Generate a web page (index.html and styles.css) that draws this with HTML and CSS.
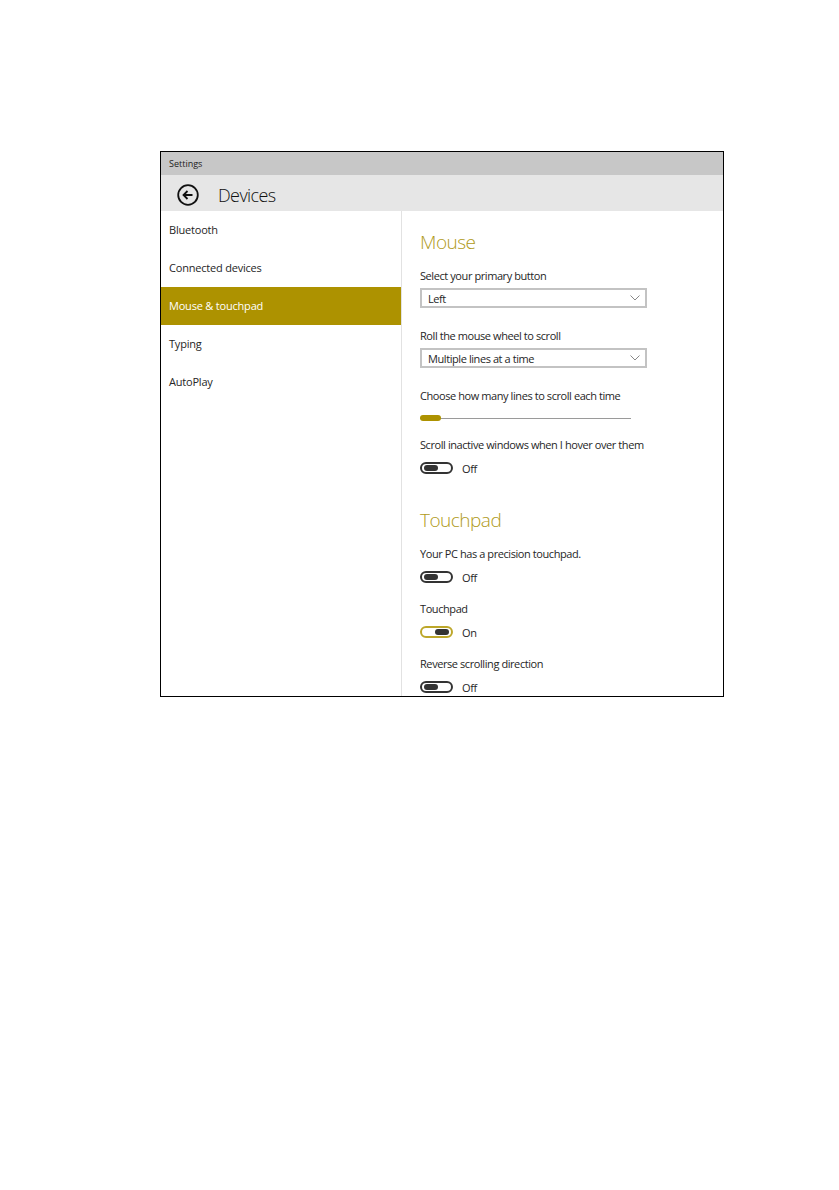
FILE: index.html
```html
<!DOCTYPE html>
<html lang="en">
<head>
  <meta charset="UTF-8" />
  <title>Settings - Devices</title>
  <link rel="stylesheet" href="styles.css">
</head>
<body>
  <div class="page">
    <div class="window">
      <div class="titlebar">Settings</div>

      <div class="header">
        <svg class="back" width="22" height="22" viewBox="0 0 22 22">
          <circle cx="11" cy="11" r="9.8" fill="none" stroke="#111" stroke-width="1.8"/>
          <path d="M15.5 11H6.5M10.5 7L6.5 11L10.5 15" fill="none" stroke="#111" stroke-width="1.8"/>
        </svg>
        <span class="header-title">Devices</span>
      </div>

      <div class="content">
        <ul class="nav">
          <li>Bluetooth</li>
          <li>Connected devices</li>
          <li class="active">Mouse &amp; touchpad</li>
          <li>Typing</li>
          <li>AutoPlay</li>
        </ul>

        <div class="panel">
          <h2 class="section-title">Mouse</h2>

          <div class="field first">
            <div class="label">Select your primary button</div>
            <div class="select">
              <span>Left</span>
              <svg width="10" height="6" viewBox="0 0 10 6"><polyline points="0.5,0.5 5,5 9.5,0.5" fill="none" stroke="#888" stroke-width="1"/></svg>
            </div>
          </div>

          <div class="field after-select">
            <div class="label">Roll the mouse wheel to scroll</div>
            <div class="select">
              <span>Multiple lines at a time</span>
              <svg width="10" height="6" viewBox="0 0 10 6"><polyline points="0.5,0.5 5,5 9.5,0.5" fill="none" stroke="#888" stroke-width="1"/></svg>
            </div>
          </div>

          <div class="field after-select">
            <div class="label">Choose how many lines to scroll each time</div>
            <div class="slider">
              <div class="slider-track"></div>
              <div class="slider-thumb"></div>
            </div>
          </div>

          <div class="field after-slider">
            <div class="label">Scroll inactive windows when I hover over them</div>
            <div class="toggle-row">
              <span class="toggle"><span class="knob"></span></span>
              <span>Off</span>
            </div>
          </div>

          <h2 class="section-title second">Touchpad</h2>

          <div class="field first">
            <div class="label">Your PC has a precision touchpad.</div>
            <div class="toggle-row">
              <span class="toggle"><span class="knob"></span></span>
              <span>Off</span>
            </div>
          </div>

          <div class="field after-toggle">
            <div class="label">Touchpad</div>
            <div class="toggle-row">
              <span class="toggle on"><span class="knob"></span></span>
              <span>On</span>
            </div>
          </div>

          <div class="field after-toggle">
            <div class="label">Reverse scrolling direction</div>
            <div class="toggle-row">
              <span class="toggle"><span class="knob"></span></span>
              <span>Off</span>
            </div>
          </div>
        </div>
      </div>
    </div>
  </div>
</body>
</html>
```

FILE: styles.css
```css
body {
  margin: 0;
  background-color: white;
  font-family: "Open Sans", "Noto Sans", sans-serif;
  color: #262626;
}

.page {
  padding: 151px 0 0 160px;
}

.window {
  width: 562px;
  height: 544px;
  border: 1px solid #000;
  display: flex;
  flex-direction: column;
  overflow: hidden;
}

.titlebar {
  height: 23px;
  background-color: #c7c7c7;
  font-size: 9px;
  line-height: 23px;
  padding-left: 8px;
  color: #222;
}

.header {
  box-sizing: border-box;
  height: 36px;
  background-color: #e6e6e6;
  display: flex;
  align-items: center;
  padding: 4px 0 0 16px;
}

.back {
  display: block;
}

.header-title {
  margin-left: 19px;
  font-size: 18px;
  font-weight: 300;
  letter-spacing: -0.6px;
  color: #111;
}

.content {
  flex: 1;
  display: flex;
  min-height: 0;
}

.nav {
  list-style: none;
  margin: 0;
  padding: 0;
  width: 240px;
  border-right: 1px solid #e2e2e2;
}

.nav li {
  height: 38px;
  line-height: 38px;
  padding-left: 8px;
  font-size: 11px;
  letter-spacing: -0.2px;
}

.nav li.active {
  background-color: #ad9200;
  color: white;
}

.panel {
  flex: 1;
  display: flex;
  flex-direction: column;
  align-items: flex-start;
  padding: 19px 0 0 18px;
  font-size: 11px;
  letter-spacing: -0.42px;
}

.section-title {
  margin: 0;
  font-size: 19px;
  line-height: 24px;
  font-weight: 300;
  letter-spacing: -0.5px;
  color: #b09a20;
}

.section-title.second {
  margin-top: 32px;
}

.label {
  line-height: 16px;
}

.field.first {
  margin-top: 14px;
}

.field.after-select {
  margin-top: 20px;
}

.field.after-slider {
  margin-top: 11px;
}

.field.after-toggle {
  margin-top: 16px;
}

.select {
  box-sizing: border-box;
  margin-top: 4px;
  width: 227px;
  height: 20px;
  border: 2px solid #c3c3c3;
  display: flex;
  align-items: center;
  justify-content: space-between;
  padding-left: 6px;
}

.select svg {
  margin-right: 5px;
}

.after-select .slider {
  margin-top: 6px;
}

.slider {
  position: relative;
  width: 211px;
  height: 16px;
}

.slider-track {
  position: absolute;
  left: 0;
  right: 0;
  top: 8px;
  height: 1px;
  background-color: #9a9a9a;
}

.slider-thumb {
  position: absolute;
  left: 0;
  top: 5px;
  width: 21px;
  height: 6px;
  border-radius: 3px;
  background-color: #ad9200;
}

.toggle-row {
  margin-top: 7px;
  height: 16px;
  display: flex;
  align-items: center;
  gap: 9px;
}

.toggle {
  box-sizing: border-box;
  width: 33px;
  height: 12px;
  border: 2px solid #333;
  border-radius: 6px;
  display: flex;
  align-items: center;
  padding: 0 2px;
}

.toggle .knob {
  width: 14px;
  height: 6px;
  border-radius: 3px;
  background-color: #333;
}

.toggle.on {
  border-color: #bda72a;
  justify-content: flex-end;
}
```
